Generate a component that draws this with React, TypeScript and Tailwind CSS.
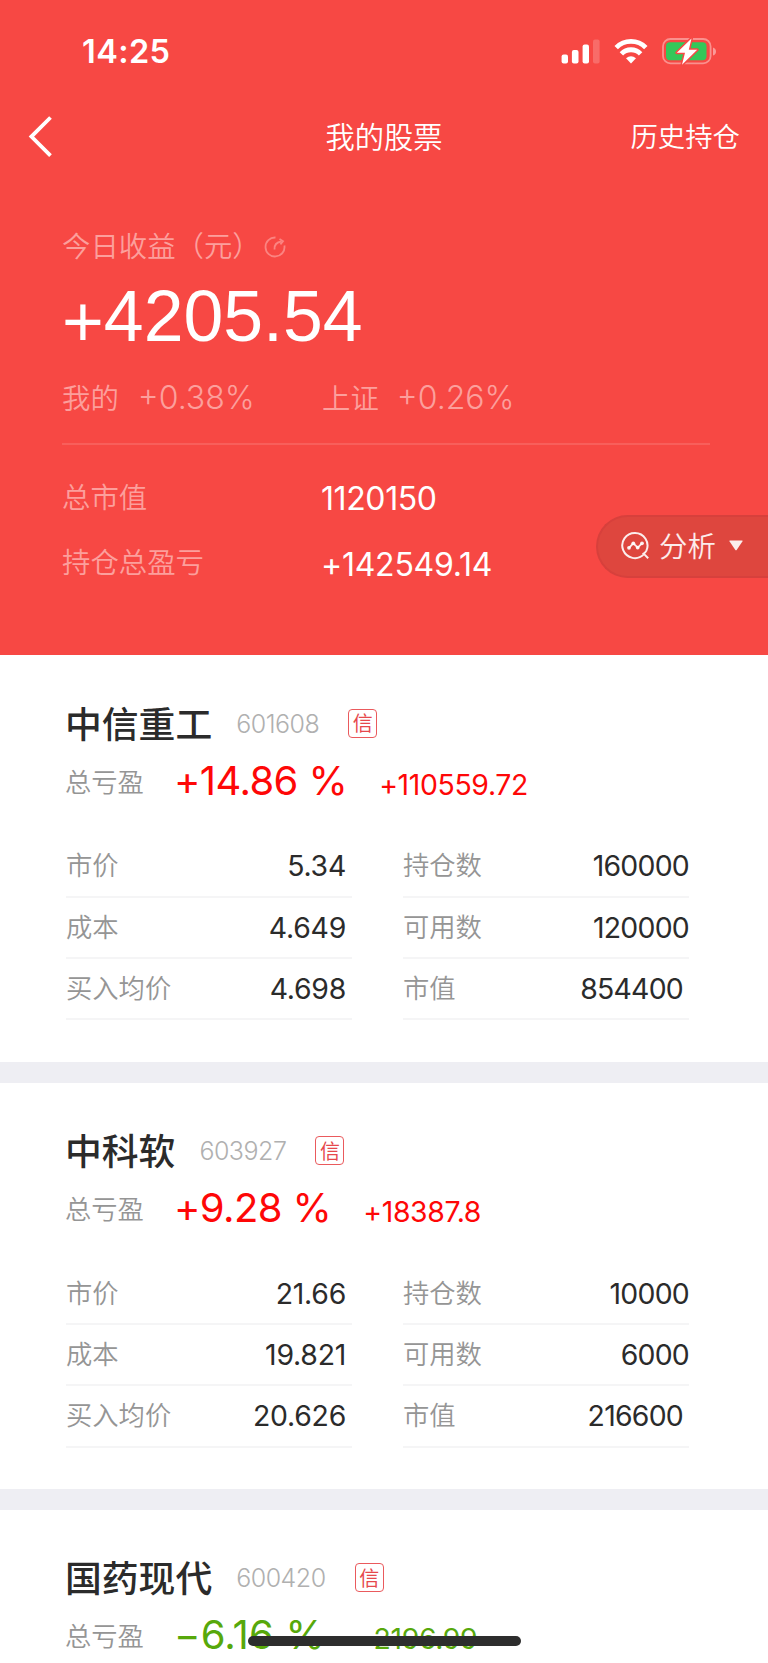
import { ReactNode } from 'react';

interface Holding {
  name: string;
  code: string;
  percent: string;
  amount: string;
  left: [string, string][];
  right: [string, string][];
  down?: boolean;
}

const holdings: Holding[] = [
  {
    name: '中信重工',
    code: '601608',
    percent: '+14.86 %',
    amount: '+110559.72',
    left: [
      ['市价', '5.34'],
      ['成本', '4.649'],
      ['买入均价', '4.698'],
    ],
    right: [
      ['持仓数', '160000'],
      ['可用数', '120000'],
      ['市值', '854400'],
    ],
  },
  {
    name: '中科软',
    code: '603927',
    percent: '+9.28 %',
    amount: '+18387.8',
    left: [
      ['市价', '21.66'],
      ['成本', '19.821'],
      ['买入均价', '20.626'],
    ],
    right: [
      ['持仓数', '10000'],
      ['可用数', '6000'],
      ['市值', '216600'],
    ],
  },
  {
    name: '国药现代',
    code: '600420',
    percent: '−6.16 %',
    amount: '−2196.99',
    left: [],
    right: [],
    down: true,
  },
];

function Num({ className = '', children }: { className?: string; children: ReactNode }) {
  return (
    <span className={`font-['Inter','Liberation_Sans',sans-serif] whitespace-pre ${className}`}>
      {children}
    </span>
  );
}

function StatusBar() {
  return (
    <div className="flex h-[103px] items-center justify-between pr-[51px] pl-[82px]">
      <Num className="pt-[2px] text-[32.5px] leading-none font-semibold tracking-[0.4px] text-white">14:25</Num>
      <div className="flex items-center">
        <svg className="h-[26px] w-[39px]" viewBox="0 0 39 26" fill="#fff">
          <rect x="0.6" y="15.4" width="6.4" height="9" rx="2" />
          <rect x="10.9" y="10.9" width="6.6" height="13.5" rx="2" />
          <rect x="21.6" y="5.4" width="6.4" height="19" rx="2" />
          <rect x="32" y="0.4" width="6.6" height="24" rx="2" opacity="0.2" />
        </svg>
        <svg className="ml-[14px] h-[26px] w-[34px]" viewBox="0 0 34 26" fill="none" stroke="#fff">
          <path d="M2.2 8.6A20.8 20.8 0 0 1 31.8 8.6" strokeWidth="4.8" />
          <path d="M7.4 14.8A13.4 13.4 0 0 1 26.6 14.8" strokeWidth="4.8" />
          <path d="M17 24.4L12 19.2Q17 15.2 22 19.2Z" fill="#fff" stroke="none" />
        </svg>
        <svg className="ml-[14px] h-[28px] w-[55px]" viewBox="0 0 55 28">
          <rect x="1" y="1" width="47.6" height="24.4" rx="7.5" fill="none" stroke="#fff" strokeOpacity="0.4" strokeWidth="1.8" />
          <path d="M51 9.4Q54 10.4 54 13.4Q54 16.4 51 17.4Z" fill="#fff" fillOpacity="0.45" />
          <rect x="4" y="4.2" width="40.5" height="18" rx="4" fill="#34c759" />
          <path
            d="M29.5 0.4L14.8 14.8H23L20 26.7L35.2 11.8H26.8Z"
            fill="#fff"
            stroke="#f74844"
            strokeWidth="3"
            strokeLinejoin="round"
            paintOrder="stroke"
          />
        </svg>
      </div>
    </div>
  );
}

function NavBar() {
  return (
    <div className="grid h-[66px] grid-cols-3 items-center px-[28px] text-white">
      <svg className="h-[42px] w-[26px]" viewBox="0 0 26 42" fill="none" stroke="#fff" strokeWidth="3.8">
        <path d="M22.5 2.5L3.4 21.6L22.5 40.6" />
      </svg>
      <h1 className="text-center text-[29.3px] leading-none font-[350]">我的股票</h1>
      <span className="text-right text-[27.4px] leading-none font-[350]">历史持仓</span>
    </div>
  );
}

function AnalysisButton() {
  return (
    <button className="absolute top-[515px] right-0 flex h-[63px] w-[172px] items-center rounded-l-full border-2 border-r-0 border-[#d7403c] bg-[#de463e] pb-[2px] pl-[23px] text-white/90">
      <svg className="h-[29px] w-[29px]" viewBox="0 0 29 29" fill="none" stroke="currentColor" strokeWidth="2">
        <path d="M22.8 23.4A12.6 12.6 0 1 1 25.4 19.6Q24.4 21.6 22.6 22.6L27.2 27.2" />
        <path d="M8 16.8L12.3 12.3L16.7 16.6L21 12.3" strokeWidth="1.8" />
        <g fill="currentColor" stroke="none">
          <circle cx="8" cy="16.8" r="1.9" />
          <circle cx="12.3" cy="12.3" r="1.9" />
          <circle cx="16.7" cy="16.6" r="1.9" />
          <circle cx="21" cy="12.3" r="1.9" />
        </g>
      </svg>
      <span className="ml-[9px] text-[28.4px] leading-none font-[350]">分析</span>
      <svg className="ml-[13px] h-[11px] w-[14px]" viewBox="0 0 14 11" fill="currentColor">
        <path d="M1 0.5H13Q14 0.5 13.4 1.5L7.8 9.8Q7 10.8 6.2 9.8L0.6 1.5Q0 0.5 1 0.5Z" />
      </svg>
    </button>
  );
}

function Summary() {
  return (
    <section className="px-[62px] pt-[52px] font-[350] text-[#fc9f9c]">
      <div className="flex h-[48px] items-center">
        <span className="text-[28.4px] leading-none">今日收益（元）</span>
        <svg className="mt-[3px] ml-[3px] h-[22px] w-[22px]" viewBox="0 0 22 22" fill="none" stroke="#fb8481" strokeWidth="1.8">
          <path d="M11.5 1.5A9.5 9.5 0 1 0 20.4 9.5" />
          <path d="M10.5 13.5Q10 6.5 17.5 5.5" />
          <path d="M15.5 3L19 5.2L16.4 8.4" />
        </svg>
      </div>
      <p className="flex h-[90px] items-center pt-[5px] font-['Liberation_Sans',sans-serif] text-[71.6px] leading-none font-normal text-white">
        <span className="relative top-[5px]">+</span>
        4205.54
      </p>
      <div className="flex h-[76px] items-center">
        <div className="flex w-[260px] items-center">
          <span className="text-[28.4px] leading-none">我的</span>
          <Num className="ml-[19px] pt-[2px] text-[32px] leading-none font-light">+0.38%</Num>
        </div>
        <div className="flex items-center">
          <span className="text-[28.4px] leading-none">上证</span>
          <Num className="ml-[18px] pt-[2px] text-[32px] leading-none font-light">+0.26%</Num>
        </div>
      </div>
      <div className="-mr-[4px] mt-[8px] h-[2px] bg-[#f85f5b]" />
      <div className="mt-[18px] flex h-[66px] items-center">
        <span className="w-[259px] text-[28.4px] leading-none">总市值</span>
        <Num className="pt-[6px] text-[32px] leading-none font-normal tracking-[-0.4px] text-white">1120150</Num>
      </div>
      <div className="flex h-[66px] items-center">
        <span className="w-[259px] pb-px text-[28.4px] leading-none">持仓总盈亏</span>
        <Num className="pt-[6px] text-[32px] leading-none font-normal tracking-[-0.25px] text-white">+142549.14</Num>
      </div>
    </section>
  );
}

interface RowProps {
  label: string;
  value: string;
  valueClass: string;
}

function Row({ label, value, valueClass }: RowProps) {
  return (
    <div className="flex h-[61.4px] items-center justify-between border-b-2 border-[#f5f5f6]">
      <span className="pb-[3px] text-[26.3px] leading-none font-[350] text-[#959595]">{label}</span>
      <Num className={`pt-px text-[28.4px] leading-none font-normal text-[#2b2b2b] ${valueClass}`}>{value}</Num>
    </div>
  );
}

function HoldingCard({ holding }: { holding: Holding }) {
  return (
    <article className="h-[427.3px] border-b-[21px] border-[#eeeef3] bg-white pt-[42px] pr-[79px] pl-[66px]">
      <div className="flex h-[52px] items-center">
        <h2 className="-ml-px pb-[2px] text-[36.8px] leading-none font-medium text-[#2b2b2b]">{holding.name}</h2>
        <Num className="ml-[24px] pt-[2px] text-[25px] leading-none font-light tracking-[-0.5px] text-[#b0b0b0]">
          {holding.code}
        </Num>
        <span className="ml-[29px] flex h-[29px] w-[29px] items-center justify-center rounded-[4px] border border-[#ea5a5d] text-[20px] leading-none text-[#e6484c]">
          信
        </span>
      </div>
      <div className="flex h-[62px] items-center">
        <span className="-ml-px w-[109px] pt-px text-[26.3px] leading-none font-[350] text-[#959595]">总亏盈</span>
        <div
          className={`flex items-baseline pt-px font-normal ${
            holding.down ? 'gap-[31px] tracking-[0.2px] text-[#57a80b]' : 'gap-[32px] tracking-[-0.6px] text-[#fe0707]'
          }`}
        >
          <Num className="text-[40px] leading-none">{holding.percent}</Num>
          <Num className="text-[28.4px] leading-none tracking-[-0.35px]">{holding.amount}</Num>
        </div>
      </div>
      <div className="mt-[25px] grid grid-cols-2 gap-x-[51px]">
        <div>
          {holding.left.map(([label, value]) => (
            <Row key={label} label={label} value={value} valueClass="tracking-[-0.25px] pr-[6px]" />
          ))}
        </div>
        <div>
          {holding.right.map(([label, value]) => (
            <Row
              key={label}
              label={label}
              value={value}
              valueClass={label === '市值' ? 'tracking-[-0.75px] pr-[6px]' : 'tracking-[-0.75px]'}
            />
          ))}
        </div>
      </div>
    </article>
  );
}

function App() {
  return (
    <div className="relative h-[1663px] w-[768px] overflow-hidden bg-white font-['Noto_Sans_CJK_SC',sans-serif]">
      <header className="h-[655.3px] bg-[#f74844]">
        <StatusBar />
        <NavBar />
        <Summary />
      </header>
      <main>
        {holdings.map((holding) => (
          <HoldingCard key={holding.code} holding={holding} />
        ))}
      </main>
      <AnalysisButton />
      <div className="absolute top-[1636px] left-[248px] h-[10px] w-[273px] rounded-full bg-[#2d2d2d]" />
    </div>
  );
}

export default App;
